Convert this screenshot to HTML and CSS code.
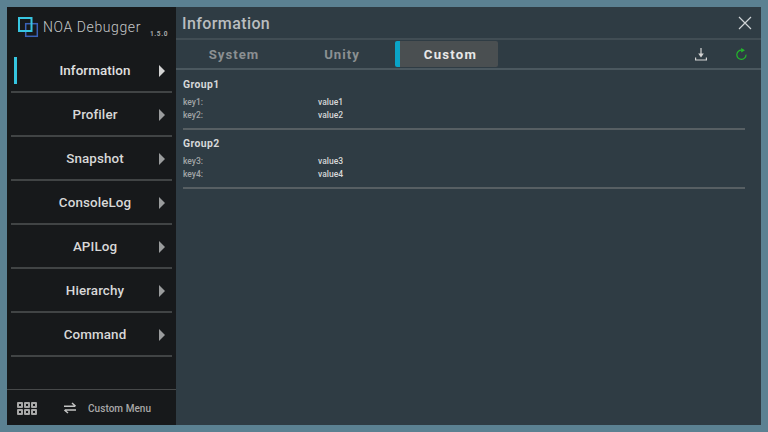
FILE: index.html
```html
<!DOCTYPE html>
<html lang="en">
<head>
  <meta charset="UTF-8" />
  <title>NOA Debugger</title>
  <link rel="stylesheet" href="styles.css">
</head>
<body>
  <div class="window">
    <aside class="sidebar">
      <div class="logo">
        <svg class="logo-icon" width="22" height="22" viewBox="0 0 22 22" fill="none">
          <rect x="8.7" y="7.7" width="11.6" height="12.6" stroke="#3a62b8" stroke-width="1.5"/>
          <rect x="2" y="2" width="12.5" height="13" stroke="#38c6e2" stroke-width="2"/>
        </svg>
        <span class="logo-name">NOA Debugger</span>
        <span class="logo-version">1.5.0</span>
      </div>
      <nav class="nav">
        <div class="nav-item active"><span class="nav-label">Information</span><span class="arrow"></span></div>
        <div class="nav-item"><span class="nav-label">Profiler</span><span class="arrow"></span></div>
        <div class="nav-item"><span class="nav-label">Snapshot</span><span class="arrow"></span></div>
        <div class="nav-item"><span class="nav-label">ConsoleLog</span><span class="arrow"></span></div>
        <div class="nav-item"><span class="nav-label">APILog</span><span class="arrow"></span></div>
        <div class="nav-item"><span class="nav-label">Hierarchy</span><span class="arrow"></span></div>
        <div class="nav-item"><span class="nav-label">Command</span><span class="arrow"></span></div>
      </nav>
      <div class="side-footer">
        <div class="grid-icon"><i></i><i></i><i></i><i></i><i></i><i></i></div>
        <svg class="swap-icon" width="14" height="12" viewBox="0 0 14 12" fill="none" stroke="#c4c4c4" stroke-width="1.5">
          <path d="M1 4.2H12M9 1L12.6 4.2"/>
          <path d="M13 8H2M5 11L1.4 8"/>
        </svg>
        <span class="custom-menu">Custom Menu</span>
      </div>
    </aside>
    <main class="main">
      <header class="title-bar">
        <h1>Information</h1>
        <svg class="close-icon" width="14" height="14" viewBox="0 0 14 14" stroke="#d0d4d6" stroke-width="1.2">
          <path d="M1 1L13 13M13 1L1 13"/>
        </svg>
      </header>
      <div class="tab-bar">
        <div class="tab">System</div>
        <div class="tab">Unity</div>
        <div class="tab selected">Custom</div>
        <div class="tab-tools">
          <svg width="12" height="13" viewBox="0 0 12 13" fill="none" stroke="#d4d4d4" stroke-width="1.2">
            <path d="M6 0V6"/>
            <path d="M3.2 5.6H8.8L6 9.4Z" fill="#d4d4d4" stroke="none"/>
            <path d="M0.6 9.5V12H11.4V9.5"/>
          </svg>
          <svg width="13" height="13" viewBox="0 0 13 13" fill="none" stroke="#23b82b" stroke-width="1.2">
            <path d="M6.5 2.2A4.6 4.6 0 1 0 11 6.6"/>
            <path d="M6.2 0L10 2.3L6.2 4.4Z" fill="#23b82b" stroke="none"/>
          </svg>
        </div>
      </div>
      <section class="content">
        <div class="group">
          <h2>Group1</h2>
          <div class="row"><span class="key">key1:</span><span class="value">value1</span></div>
          <div class="row"><span class="key">key2:</span><span class="value">value2</span></div>
        </div>
        <div class="group">
          <h2>Group2</h2>
          <div class="row"><span class="key">key3:</span><span class="value">value3</span></div>
          <div class="row"><span class="key">key4:</span><span class="value">value4</span></div>
        </div>
      </section>
    </main>
  </div>
</body>
</html>
```

FILE: styles.css
```css
html, body { margin: 0; height: 100%; }
body { background: #5b8192; font-family: Roboto, sans-serif; overflow: hidden; }
.window { display: flex; box-sizing: border-box; width: 768px; height: 432px; padding: 7px; }

.sidebar { width: 169px; flex: none; background: #17191b; display: flex; flex-direction: column; }
.logo { display: flex; align-items: flex-start; height: 42px; box-sizing: border-box; padding: 9px 0 0 10px; white-space: nowrap; }
.logo-icon { flex: none; }
.logo-name { font-size: 14px; font-weight: 300; letter-spacing: 0.6px; color: #c6c8c9; margin: 2px 0 0 4px; line-height: 18px; }
.logo-version { font-size: 6.5px; font-weight: 700; letter-spacing: 0.6px; color: #a9abac; margin: 14px 0 0 9px; }

.nav { margin: 0 4px; flex: 1; }
.nav-item { position: relative; height: 41px; padding-top: 1px; display: flex; align-items: center; border-bottom: 2px solid #414445; }
.nav-label { flex: 1; text-align: center; padding-left: 20px; font-size: 13.4px; font-weight: 500; color: #d8d8d8; letter-spacing: 0.1px; }
.arrow { width: 0; height: 0; border-left: 6px solid #9a9c9d; border-top: 6.5px solid transparent; border-bottom: 6.5px solid transparent; margin-right: 7px; }
.active .arrow { border-left-color: #d4d4d4; }
.active::before { content: ""; position: absolute; left: 3px; top: 8px; width: 3px; height: 27px; background: #35c5e0; }
.active .nav-label { color: #e0e0e0; }

.side-footer { height: 34px; border-top: 1px solid #47494a; display: flex; align-items: center; padding-top: 1px; }
.grid-icon { display: grid; grid-template-columns: repeat(3, 6px); grid-auto-rows: 6px; gap: 1px; margin-left: 10px; }
.grid-icon i { border: 2px solid #a8a8a8; box-sizing: border-box; border-radius: 1px; }
.swap-icon { margin-left: 26px; }
.custom-menu { font-size: 10px; font-weight: 500; color: #a8a8a8; margin-left: 11px; letter-spacing: 0.05px; }

.main { flex: 1; background: #2f3c44; display: flex; flex-direction: column; }
.title-bar { height: 30px; padding: 1px 9px 0 6px; border-bottom: 2px solid #414d54; display: flex; align-items: center; justify-content: space-between; }
.title-bar h1 { margin: 0; font-size: 16px; font-weight: 500; color: #b9bdbf; letter-spacing: 0.4px; }
.tab-bar { height: 28px; border-bottom: 2px solid #4b585f; display: flex; align-items: center; }
.tab { width: 116px; text-align: center; font-size: 13.2px; font-weight: 700; color: #8b9092; letter-spacing: 1px; }
.tab:nth-child(2) { width: 100px; }
.tab.selected { width: 103px; margin-left: 3px; height: 26px; line-height: 27px; background: #4a4f51; color: #e8e8e8; letter-spacing: 1.25px; padding-left: 3px; border-left: 5px solid #0aa4c8; border-radius: 2px; box-sizing: border-box; }
.tab-tools { margin-left: auto; display: flex; align-items: center; gap: 28px; padding-right: 13px; }

.content { padding: 0 16px 0 7px; }
.group { border-bottom: 2px solid #575f63; height: 58px; }
.group + .group { height: 57px; }
.group h2 { margin: 0 0 5px; padding-top: 9px; font-size: 10.4px; font-weight: 700; line-height: 12px; color: #d6d8d9; letter-spacing: 0.4px; }
.group + .group h2 { padding-top: 8px; }
.row { display: flex; font-size: 8.5px; font-weight: 500; line-height: 13px; }
.key { width: 135px; color: #a1a5a7; }
.value { color: #d6d8d9; }
```
